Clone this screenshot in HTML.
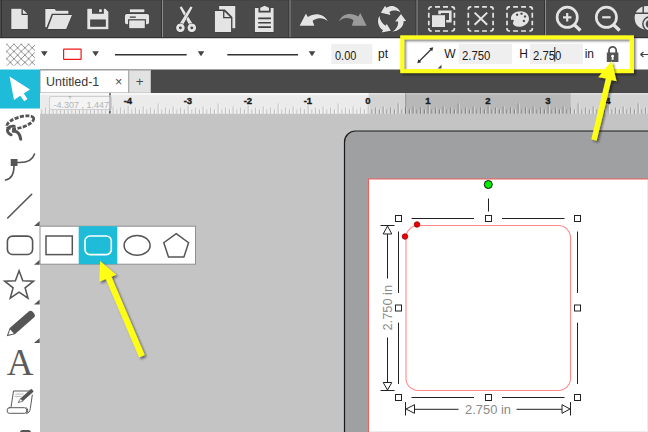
<!DOCTYPE html>
<html><head><meta charset="utf-8"><title>Silhouette Studio</title>
<style>
html,body{margin:0;padding:0;background:#c4c4c4;overflow:hidden}
body{width:648px;height:432px;position:relative;font-family:"Liberation Sans",sans-serif}
svg{position:absolute;left:0;top:0;display:block}
text{font-family:"Liberation Sans",sans-serif}
.rl{font-size:9.5px;font-weight:bold;fill:#1a1a1a;stroke:#1a1a1a;stroke-width:0.35px}
.ui{font-size:12px;fill:#1a1a1a}
.dim{font-size:12.5px;fill:#8a8a8a}
</style></head><body>
<svg width="648" height="432" viewBox="0 0 648 432">
<defs>
<clipPath id="pg"><rect x="369.5" y="90" width="280" height="30"/></clipPath>
<filter id="sh" x="-20%" y="-20%" width="140%" height="140%"><feDropShadow dx="1.8" dy="1.8" stdDeviation="1.3" flood-color="#000" flood-opacity="0.5"/></filter>
<pattern id="hatch" width="7.3" height="7.3" patternUnits="userSpaceOnUse" patternTransform="translate(3,40.5)"><path d="M0,0L7.3,7.3M7.3,0L0,7.3" stroke="#666" stroke-width="0.7" fill="none"/></pattern>
</defs>
<!-- canvas -->
<rect x="0" y="0" width="648" height="432" fill="#c4c4c4"/>
<!-- mat -->
<rect x="344.5" y="131" width="330" height="330" rx="11" fill="#9fa0a1" stroke="#1a1a1a" stroke-width="1.2"/>
<!-- page -->
<rect x="368.5" y="179" width="300" height="300" fill="#fff" stroke="#ee5c5c" stroke-width="1"/>
<!-- top toolbar -->
<rect x="0" y="0" width="648" height="38" fill="#4a4a4a"/>
<rect x="0" y="0" width="648" height="1" fill="#444"/>
<rect x="0" y="37" width="648" height="1.4" fill="#333"/>
<rect x="1" y="0" width="1" height="37" fill="#333"/>
<g id="seps" stroke-width="1">
<path d="M161.5,0v37M289,0v37M416,0v37M544.5,0v37" stroke="#333"/>
<path d="M162.5,0v37M290,0v37M417,0v37M545.5,0v37" stroke="#8c8c8c"/>
</g>
<!-- white toolbar -->
<rect x="0" y="38.4" width="648" height="31.6" fill="#fff"/>
<!-- tab bar -->
<rect x="40" y="69.5" width="608" height="23.5" fill="#4a4a4a"/>
<rect x="40" y="70" width="88.5" height="23" fill="#fff" stroke="#9a9a9a" stroke-width="1"/>
<rect x="129" y="70.5" width="21.5" height="22.5" fill="#e2e2e2" stroke="#bdbdbd" stroke-width="1"/>
<text x="46" y="86" textLength="53.3" lengthAdjust="spacingAndGlyphs" style="font-size:13px;fill:#3a3a3a">Untitled-1</text>
<text x="118.6" y="85.6" text-anchor="middle" style="font-size:12.5px;fill:#4a4a4a">×</text>
<text x="139.6" y="86" text-anchor="middle" style="font-size:13.5px;fill:#4a4a4a">+</text>
<!-- ruler -->
<rect x="40" y="93" width="608" height="20.8" fill="#ebebeb"/>
<rect x="40" y="93" width="608" height="2" fill="#fff" fill-opacity="0.6"/>
<rect x="368.7" y="93" width="280" height="20.8" fill="#000" fill-opacity="0.1"/>
<rect x="405.7" y="93" width="165" height="20.8" fill="#000" fill-opacity="0.125"/>
<path d="M405.7,93v20.8" stroke="#000" stroke-opacity="0.25" stroke-width="1"/>
<path d="M42.45,113.8v-4.3 M46.20,113.8v-6.3 M49.95,113.8v-4.3 M53.70,113.8v-7.3 M57.45,113.8v-4.3 M61.20,113.8v-6.3 M64.95,113.8v-4.3 M68.70,113.8v-8.3 M72.45,113.8v-4.3 M76.20,113.8v-6.3 M79.95,113.8v-4.3 M83.70,113.8v-7.3 M87.45,113.8v-4.3 M91.20,113.8v-6.3 M94.95,113.8v-4.3 M98.70,113.8v-10.3 M102.45,113.8v-4.3 M106.20,113.8v-6.3 M109.95,113.8v-4.3 M113.70,113.8v-7.3 M117.45,113.8v-4.3 M121.20,113.8v-6.3 M124.95,113.8v-4.3 M128.70,113.8v-8.3 M132.45,113.8v-4.3 M136.20,113.8v-6.3 M139.95,113.8v-4.3 M143.70,113.8v-7.3 M147.45,113.8v-4.3 M151.20,113.8v-6.3 M154.95,113.8v-4.3 M158.70,113.8v-10.3 M162.45,113.8v-4.3 M166.20,113.8v-6.3 M169.95,113.8v-4.3 M173.70,113.8v-7.3 M177.45,113.8v-4.3 M181.20,113.8v-6.3 M184.95,113.8v-4.3 M188.70,113.8v-8.3 M192.45,113.8v-4.3 M196.20,113.8v-6.3 M199.95,113.8v-4.3 M203.70,113.8v-7.3 M207.45,113.8v-4.3 M211.20,113.8v-6.3 M214.95,113.8v-4.3 M218.70,113.8v-10.3 M222.45,113.8v-4.3 M226.20,113.8v-6.3 M229.95,113.8v-4.3 M233.70,113.8v-7.3 M237.45,113.8v-4.3 M241.20,113.8v-6.3 M244.95,113.8v-4.3 M248.70,113.8v-8.3 M252.45,113.8v-4.3 M256.20,113.8v-6.3 M259.95,113.8v-4.3 M263.70,113.8v-7.3 M267.45,113.8v-4.3 M271.20,113.8v-6.3 M274.95,113.8v-4.3 M278.70,113.8v-10.3 M282.45,113.8v-4.3 M286.20,113.8v-6.3 M289.95,113.8v-4.3 M293.70,113.8v-7.3 M297.45,113.8v-4.3 M301.20,113.8v-6.3 M304.95,113.8v-4.3 M308.70,113.8v-8.3 M312.45,113.8v-4.3 M316.20,113.8v-6.3 M319.95,113.8v-4.3 M323.70,113.8v-7.3 M327.45,113.8v-4.3 M331.20,113.8v-6.3 M334.95,113.8v-4.3 M338.70,113.8v-10.3 M342.45,113.8v-4.3 M346.20,113.8v-6.3 M349.95,113.8v-4.3 M353.70,113.8v-7.3 M357.45,113.8v-4.3 M361.20,113.8v-6.3 M364.95,113.8v-4.3 M368.70,113.8v-8.3 M372.45,113.8v-4.3 M376.20,113.8v-6.3 M379.95,113.8v-4.3 M383.70,113.8v-7.3 M387.45,113.8v-4.3 M391.20,113.8v-6.3 M394.95,113.8v-4.3 M398.70,113.8v-10.3 M402.45,113.8v-4.3 M406.20,113.8v-6.3 M409.95,113.8v-4.3 M413.70,113.8v-7.3 M417.45,113.8v-4.3 M421.20,113.8v-6.3 M424.95,113.8v-4.3 M428.70,113.8v-8.3 M432.45,113.8v-4.3 M436.20,113.8v-6.3 M439.95,113.8v-4.3 M443.70,113.8v-7.3 M447.45,113.8v-4.3 M451.20,113.8v-6.3 M454.95,113.8v-4.3 M458.70,113.8v-10.3 M462.45,113.8v-4.3 M466.20,113.8v-6.3 M469.95,113.8v-4.3 M473.70,113.8v-7.3 M477.45,113.8v-4.3 M481.20,113.8v-6.3 M484.95,113.8v-4.3 M488.70,113.8v-8.3 M492.45,113.8v-4.3 M496.20,113.8v-6.3 M499.95,113.8v-4.3 M503.70,113.8v-7.3 M507.45,113.8v-4.3 M511.20,113.8v-6.3 M514.95,113.8v-4.3 M518.70,113.8v-10.3 M522.45,113.8v-4.3 M526.20,113.8v-6.3 M529.95,113.8v-4.3 M533.70,113.8v-7.3 M537.45,113.8v-4.3 M541.20,113.8v-6.3 M544.95,113.8v-4.3 M548.70,113.8v-8.3 M552.45,113.8v-4.3 M556.20,113.8v-6.3 M559.95,113.8v-4.3 M563.70,113.8v-7.3 M567.45,113.8v-4.3 M571.20,113.8v-6.3 M574.95,113.8v-4.3 M578.70,113.8v-10.3 M582.45,113.8v-4.3 M586.20,113.8v-6.3 M589.95,113.8v-4.3 M593.70,113.8v-7.3 M597.45,113.8v-4.3 M601.20,113.8v-6.3 M604.95,113.8v-4.3 M608.70,113.8v-8.3 M612.45,113.8v-4.3 M616.20,113.8v-6.3 M619.95,113.8v-4.3 M623.70,113.8v-7.3 M627.45,113.8v-4.3 M631.20,113.8v-6.3 M634.95,113.8v-4.3 M638.70,113.8v-10.3 M642.45,113.8v-4.3 M646.20,113.8v-6.3" stroke="#000" stroke-opacity="0.2" stroke-width="1" transform="translate(-0.5,0)"/>
<path d="M42.45,113.8v-4.3 M46.20,113.8v-6.3 M49.95,113.8v-4.3 M53.70,113.8v-7.3 M57.45,113.8v-4.3 M61.20,113.8v-6.3 M64.95,113.8v-4.3 M68.70,113.8v-8.3 M72.45,113.8v-4.3 M76.20,113.8v-6.3 M79.95,113.8v-4.3 M83.70,113.8v-7.3 M87.45,113.8v-4.3 M91.20,113.8v-6.3 M94.95,113.8v-4.3 M98.70,113.8v-10.3 M102.45,113.8v-4.3 M106.20,113.8v-6.3 M109.95,113.8v-4.3 M113.70,113.8v-7.3 M117.45,113.8v-4.3 M121.20,113.8v-6.3 M124.95,113.8v-4.3 M128.70,113.8v-8.3 M132.45,113.8v-4.3 M136.20,113.8v-6.3 M139.95,113.8v-4.3 M143.70,113.8v-7.3 M147.45,113.8v-4.3 M151.20,113.8v-6.3 M154.95,113.8v-4.3 M158.70,113.8v-10.3 M162.45,113.8v-4.3 M166.20,113.8v-6.3 M169.95,113.8v-4.3 M173.70,113.8v-7.3 M177.45,113.8v-4.3 M181.20,113.8v-6.3 M184.95,113.8v-4.3 M188.70,113.8v-8.3 M192.45,113.8v-4.3 M196.20,113.8v-6.3 M199.95,113.8v-4.3 M203.70,113.8v-7.3 M207.45,113.8v-4.3 M211.20,113.8v-6.3 M214.95,113.8v-4.3 M218.70,113.8v-10.3 M222.45,113.8v-4.3 M226.20,113.8v-6.3 M229.95,113.8v-4.3 M233.70,113.8v-7.3 M237.45,113.8v-4.3 M241.20,113.8v-6.3 M244.95,113.8v-4.3 M248.70,113.8v-8.3 M252.45,113.8v-4.3 M256.20,113.8v-6.3 M259.95,113.8v-4.3 M263.70,113.8v-7.3 M267.45,113.8v-4.3 M271.20,113.8v-6.3 M274.95,113.8v-4.3 M278.70,113.8v-10.3 M282.45,113.8v-4.3 M286.20,113.8v-6.3 M289.95,113.8v-4.3 M293.70,113.8v-7.3 M297.45,113.8v-4.3 M301.20,113.8v-6.3 M304.95,113.8v-4.3 M308.70,113.8v-8.3 M312.45,113.8v-4.3 M316.20,113.8v-6.3 M319.95,113.8v-4.3 M323.70,113.8v-7.3 M327.45,113.8v-4.3 M331.20,113.8v-6.3 M334.95,113.8v-4.3 M338.70,113.8v-10.3 M342.45,113.8v-4.3 M346.20,113.8v-6.3 M349.95,113.8v-4.3 M353.70,113.8v-7.3 M357.45,113.8v-4.3 M361.20,113.8v-6.3 M364.95,113.8v-4.3 M368.70,113.8v-8.3 M372.45,113.8v-4.3 M376.20,113.8v-6.3 M379.95,113.8v-4.3 M383.70,113.8v-7.3 M387.45,113.8v-4.3 M391.20,113.8v-6.3 M394.95,113.8v-4.3 M398.70,113.8v-10.3 M402.45,113.8v-4.3 M406.20,113.8v-6.3 M409.95,113.8v-4.3 M413.70,113.8v-7.3 M417.45,113.8v-4.3 M421.20,113.8v-6.3 M424.95,113.8v-4.3 M428.70,113.8v-8.3 M432.45,113.8v-4.3 M436.20,113.8v-6.3 M439.95,113.8v-4.3 M443.70,113.8v-7.3 M447.45,113.8v-4.3 M451.20,113.8v-6.3 M454.95,113.8v-4.3 M458.70,113.8v-10.3 M462.45,113.8v-4.3 M466.20,113.8v-6.3 M469.95,113.8v-4.3 M473.70,113.8v-7.3 M477.45,113.8v-4.3 M481.20,113.8v-6.3 M484.95,113.8v-4.3 M488.70,113.8v-8.3 M492.45,113.8v-4.3 M496.20,113.8v-6.3 M499.95,113.8v-4.3 M503.70,113.8v-7.3 M507.45,113.8v-4.3 M511.20,113.8v-6.3 M514.95,113.8v-4.3 M518.70,113.8v-10.3 M522.45,113.8v-4.3 M526.20,113.8v-6.3 M529.95,113.8v-4.3 M533.70,113.8v-7.3 M537.45,113.8v-4.3 M541.20,113.8v-6.3 M544.95,113.8v-4.3 M548.70,113.8v-8.3 M552.45,113.8v-4.3 M556.20,113.8v-6.3 M559.95,113.8v-4.3 M563.70,113.8v-7.3 M567.45,113.8v-4.3 M571.20,113.8v-6.3 M574.95,113.8v-4.3 M578.70,113.8v-10.3 M582.45,113.8v-4.3 M586.20,113.8v-6.3 M589.95,113.8v-4.3 M593.70,113.8v-7.3 M597.45,113.8v-4.3 M601.20,113.8v-6.3 M604.95,113.8v-4.3 M608.70,113.8v-8.3 M612.45,113.8v-4.3 M616.20,113.8v-6.3 M619.95,113.8v-4.3 M623.70,113.8v-7.3 M627.45,113.8v-4.3 M631.20,113.8v-6.3 M634.95,113.8v-4.3 M638.70,113.8v-10.3 M642.45,113.8v-4.3 M646.20,113.8v-6.3" stroke="#000" stroke-opacity="0.13" stroke-width="1" transform="translate(-0.5,0)" clip-path="url(#pg)"/>
<path d="M42.45,113.8v-4.3 M46.20,113.8v-6.3 M49.95,113.8v-4.3 M53.70,113.8v-7.3 M57.45,113.8v-4.3 M61.20,113.8v-6.3 M64.95,113.8v-4.3 M68.70,113.8v-8.3 M72.45,113.8v-4.3 M76.20,113.8v-6.3 M79.95,113.8v-4.3 M83.70,113.8v-7.3 M87.45,113.8v-4.3 M91.20,113.8v-6.3 M94.95,113.8v-4.3 M98.70,113.8v-10.3 M102.45,113.8v-4.3 M106.20,113.8v-6.3 M109.95,113.8v-4.3 M113.70,113.8v-7.3 M117.45,113.8v-4.3 M121.20,113.8v-6.3 M124.95,113.8v-4.3 M128.70,113.8v-8.3 M132.45,113.8v-4.3 M136.20,113.8v-6.3 M139.95,113.8v-4.3 M143.70,113.8v-7.3 M147.45,113.8v-4.3 M151.20,113.8v-6.3 M154.95,113.8v-4.3 M158.70,113.8v-10.3 M162.45,113.8v-4.3 M166.20,113.8v-6.3 M169.95,113.8v-4.3 M173.70,113.8v-7.3 M177.45,113.8v-4.3 M181.20,113.8v-6.3 M184.95,113.8v-4.3 M188.70,113.8v-8.3 M192.45,113.8v-4.3 M196.20,113.8v-6.3 M199.95,113.8v-4.3 M203.70,113.8v-7.3 M207.45,113.8v-4.3 M211.20,113.8v-6.3 M214.95,113.8v-4.3 M218.70,113.8v-10.3 M222.45,113.8v-4.3 M226.20,113.8v-6.3 M229.95,113.8v-4.3 M233.70,113.8v-7.3 M237.45,113.8v-4.3 M241.20,113.8v-6.3 M244.95,113.8v-4.3 M248.70,113.8v-8.3 M252.45,113.8v-4.3 M256.20,113.8v-6.3 M259.95,113.8v-4.3 M263.70,113.8v-7.3 M267.45,113.8v-4.3 M271.20,113.8v-6.3 M274.95,113.8v-4.3 M278.70,113.8v-10.3 M282.45,113.8v-4.3 M286.20,113.8v-6.3 M289.95,113.8v-4.3 M293.70,113.8v-7.3 M297.45,113.8v-4.3 M301.20,113.8v-6.3 M304.95,113.8v-4.3 M308.70,113.8v-8.3 M312.45,113.8v-4.3 M316.20,113.8v-6.3 M319.95,113.8v-4.3 M323.70,113.8v-7.3 M327.45,113.8v-4.3 M331.20,113.8v-6.3 M334.95,113.8v-4.3 M338.70,113.8v-10.3 M342.45,113.8v-4.3 M346.20,113.8v-6.3 M349.95,113.8v-4.3 M353.70,113.8v-7.3 M357.45,113.8v-4.3 M361.20,113.8v-6.3 M364.95,113.8v-4.3 M368.70,113.8v-8.3 M372.45,113.8v-4.3 M376.20,113.8v-6.3 M379.95,113.8v-4.3 M383.70,113.8v-7.3 M387.45,113.8v-4.3 M391.20,113.8v-6.3 M394.95,113.8v-4.3 M398.70,113.8v-10.3 M402.45,113.8v-4.3 M406.20,113.8v-6.3 M409.95,113.8v-4.3 M413.70,113.8v-7.3 M417.45,113.8v-4.3 M421.20,113.8v-6.3 M424.95,113.8v-4.3 M428.70,113.8v-8.3 M432.45,113.8v-4.3 M436.20,113.8v-6.3 M439.95,113.8v-4.3 M443.70,113.8v-7.3 M447.45,113.8v-4.3 M451.20,113.8v-6.3 M454.95,113.8v-4.3 M458.70,113.8v-10.3 M462.45,113.8v-4.3 M466.20,113.8v-6.3 M469.95,113.8v-4.3 M473.70,113.8v-7.3 M477.45,113.8v-4.3 M481.20,113.8v-6.3 M484.95,113.8v-4.3 M488.70,113.8v-8.3 M492.45,113.8v-4.3 M496.20,113.8v-6.3 M499.95,113.8v-4.3 M503.70,113.8v-7.3 M507.45,113.8v-4.3 M511.20,113.8v-6.3 M514.95,113.8v-4.3 M518.70,113.8v-10.3 M522.45,113.8v-4.3 M526.20,113.8v-6.3 M529.95,113.8v-4.3 M533.70,113.8v-7.3 M537.45,113.8v-4.3 M541.20,113.8v-6.3 M544.95,113.8v-4.3 M548.70,113.8v-8.3 M552.45,113.8v-4.3 M556.20,113.8v-6.3 M559.95,113.8v-4.3 M563.70,113.8v-7.3 M567.45,113.8v-4.3 M571.20,113.8v-6.3 M574.95,113.8v-4.3 M578.70,113.8v-10.3 M582.45,113.8v-4.3 M586.20,113.8v-6.3 M589.95,113.8v-4.3 M593.70,113.8v-7.3 M597.45,113.8v-4.3 M601.20,113.8v-6.3 M604.95,113.8v-4.3 M608.70,113.8v-8.3 M612.45,113.8v-4.3 M616.20,113.8v-6.3 M619.95,113.8v-4.3 M623.70,113.8v-7.3 M627.45,113.8v-4.3 M631.20,113.8v-6.3 M634.95,113.8v-4.3 M638.70,113.8v-10.3 M642.45,113.8v-4.3 M646.20,113.8v-6.3" stroke="#fff" stroke-opacity="0.5" stroke-width="1" transform="translate(0.5,0)"/>
<text x="127.9" y="103.8" text-anchor="middle" class="rl">-4</text><text x="187.9" y="103.8" text-anchor="middle" class="rl">-3</text><text x="247.9" y="103.8" text-anchor="middle" class="rl">-2</text><text x="307.9" y="103.8" text-anchor="middle" class="rl">-1</text><text x="367.9" y="103.8" text-anchor="middle" class="rl">0</text><text x="427.9" y="103.8" text-anchor="middle" class="rl">1</text><text x="487.9" y="103.8" text-anchor="middle" class="rl">2</text><text x="547.9" y="103.8" text-anchor="middle" class="rl">3</text><text x="607.9" y="103.8" text-anchor="middle" class="rl">4</text>
<rect x="49.5" y="96.5" width="62" height="13" rx="1.5" fill="#f6f6f6" fill-opacity="0.8" stroke="#cfcfcf" stroke-width="1"/>
<path d="M110,93v2.5M110,111v2.5" stroke="#333" stroke-width="1.2"/>
<path d="M110,95.5v15.5" stroke="#999" stroke-width="1.2"/>
<path d="M68.5,96.5h3M69,98h2" stroke="#aaa" stroke-width="0.8"/>
<text x="53.5" y="108" textLength="55.5" lengthAdjust="spacingAndGlyphs" style="font-size:9.5px;fill:#b4b4b4">-4.307 , 1.447</text>
<!-- left panel -->
<rect x="0" y="69.5" width="40" height="363" fill="#fff"/>
<rect x="0" y="69.5" width="40" height="39" fill="#1fbcd9"/>
<path d="M9.6,76.4L30,89.4L23.8,93.5L27.5,99L24.2,101.2L20.2,95.8L14,100z" fill="#fff"/>
<!-- ===== white toolbar ===== -->
<rect x="6.2" y="43.7" width="28.8" height="21.8" fill="url(#hatch)"/>
<path d="M41,51.3h6.6l-3.3,5z" fill="#444"/>
<rect x="63.6" y="49.2" width="17.5" height="10.2" rx="0.5" fill="#fff" stroke="#f01818" stroke-width="1.2"/>
<path d="M92.3,51.3h6.6l-3.3,5z" fill="#444"/>
<path d="M115,54.8h71.7" stroke="#333" stroke-width="1.6"/>
<path d="M197.7,51.3h6.6l-3.3,5z" fill="#444"/>
<path d="M227.3,54.8h70.7" stroke="#333" stroke-width="1.6"/>
<path d="M308.7,51.3h6.6l-3.3,5z" fill="#444"/>
<rect x="331.3" y="44" width="41" height="20" fill="#efefef"/>
<text x="335" y="59.5" class="ui" textLength="21.3" lengthAdjust="spacingAndGlyphs">0.00</text>
<text x="378" y="58.1" class="ui">pt</text>
<!-- yellow highlight -->
<rect x="402.7" y="38.4" width="229.3" height="31.6" fill="#fff"/>
<rect x="402.2" y="37.3" width="229.7" height="33.8" fill="none" stroke="#ffff1e" stroke-width="4" filter="url(#sh)"/>
<path d="M418.5,62l13.5,-13.5" stroke="#333" stroke-width="1.2" fill="none"/>
<path d="M417.3,63.2l1,-4l3,3z M433.2,47.3l-4,1l3,3z" fill="#333"/>
<path d="M441.5,64.8v3.6h-3.8z" fill="#444"/>
<text x="444.3" y="58" class="ui">W</text>
<rect x="458.7" y="44" width="53.3" height="20" fill="#efefef"/>
<text x="462" y="59.5" class="ui" textLength="28.4" lengthAdjust="spacingAndGlyphs">2.750</text>
<text x="519.3" y="58" class="ui">H</text>
<rect x="530" y="44" width="53" height="20" fill="#efefef"/>
<text x="533" y="59.5" class="ui" textLength="28.4" lengthAdjust="spacingAndGlyphs">2.750</text>
<path d="M554.8,47v14.5" stroke="#222" stroke-width="1"/>
<text x="584.7" y="58" class="ui">in</text>
<!-- lock -->
<path d="M609,53v-2.6a3.6,3.6 0 0 1 7.2,0v2.6" fill="none" stroke="#555" stroke-width="1.8"/>
<rect x="606.8" y="52.5" width="11.6" height="9.5" fill="#555"/>
<circle cx="612.6" cy="56.2" r="1.4" fill="#fff"/>
<path d="M612,56.5h1.2l0.5,3.3h-2.2z" fill="#fff"/>
<path d="M640.5,54.5h8M640.5,54.5l3,-2.5M640.5,54.5l3,2.5" stroke="#444" stroke-width="1.2" fill="none"/>
<!-- ===== top toolbar icons ===== -->
<g fill="#e4e4e4" stroke="#3a3a3a" stroke-width="1" paint-order="stroke">
<!-- new -->
<path d="M11.3,8.7h10.2v6.2h6.3v14.2h-16.5z"/>
<path d="M22.8,9.2l4.6,4.6h-4.6z"/>
<!-- open -->
<path d="M45.3,8.9h9.3l1.4,1.8h12.4v3h-16.6l-5.2,13.6h-1.3z"/>
<path d="M52.9,15.1h19.1l-5.8,14h-18.6z"/>
<!-- save -->
<path d="M87.3,8.7h4.7v5.1h11.8v-5.1h1.6l3,3v17.6h-21.1z M90.2,19.6v7.1h15.6v-7.1z" fill-rule="evenodd"/>
<rect x="99.1" y="9.3" width="2.7" height="2.8"/>
<!-- print -->
<rect x="129.8" y="9.3" width="14.6" height="2.9"/>
<path d="M126.9,14h20.2a2,2 0 0 1 2,2v6.2a2,2 0 0 1 -2,2h-1.2v-5h-17.8v5h-1.2a2,2 0 0 1 -2,-2v-6.2a2,2 0 0 1 2,-2z M129.8,16.4v1.4h6v-1.4z" fill-rule="evenodd"/>
<rect x="129.2" y="20.4" width="15.6" height="7.8"/>
<!-- scissors -->
<path d="M179.6,7.500L181.6,6.300L192.440,23.600L189.560,25.400Z"/>
<path d="M192.6,7.500L190.6,6.300L179.760,23.600L182.640,25.400Z"/>
<path d="M180.4,23.500a4.300,4.300 0 1 0 0.010,0z M180.4,26.400a1.400,1.400 0 1 1 -0.010,0z" fill-rule="evenodd"/>
<path d="M191.8,23.500a4.300,4.300 0 1 0 0.010,0z M191.8,26.400a1.400,1.400 0 1 1 -0.010,0z" fill-rule="evenodd"/>
<!-- copy -->
<path d="M219.1,6h16.2v22.2h-2.9v-11.3l-7.5,-7.3h-5.8z"/>
<path d="M214.9,10.9h8.2v7.3h8v13.8h-16.2z"/>
<path d="M224.4,11.5l5.6,5.4h-5.6z"/>
<!-- paste -->
<path d="M254.9,8.1h3.6v4.3h12.1v-4.3h3v24h-18.7z M258.2,17.6v1.6h12.7v-1.6z M258.2,22v1.6h12.7v-1.6z M258.2,26.3v1.6h12.7v-1.6z" fill-rule="evenodd"/>
<path d="M260.2,10.7v-3l4.4,-2l4.4,2v3z"/>
<!-- undo -->
<path d="M299.6,25.7l6.3,-12.2l2,3.4c7,-4.6 16,-3.4 20.1,4.4c-4.6,-4 -10.6,-4.2 -15.400,-0.600l1.8,5z"/>
</g>
<!-- redo -->
<path d="M366.6,25.7l-6.3,-12.600l-2,3.400c-7,-4.600 -16,-3.200 -19.500,4.800c4.400,-4.200 10,-4.400 14.800,-1l-1.800,5.400z" fill="#9a9a9a"/>
<g fill="#e4e4e4" stroke="#3a3a3a" stroke-width="1" paint-order="stroke">
<!-- recycle -->
<path d="M380.8,12.8L385,5.8L386.4,7.8C391.5,4.200 397.8,6.200 400.6,12.400C396.6,9.900 393,9.900 389.4,11.900L390.6,14.900Z"/>
<path d="M401,14L406.2,21L403.6,21.200C404,26.500 399,31.200 392,31.700C396,29.600 398.3,26 398.1,21.400L395,21.400Z"/>
<path d="M390.9,30.700L381.5,32.600L383,30.200C378.2,27 376.6,21 379.4,15.700C380,20.400 382.3,23.800 385.8,25.800L386.7,23.700Z"/>
</g>
<!-- select boxes -->
<g fill="none" stroke="#e4e4e4" stroke-width="1.7">
<path d="M428.8,9.8V9.2A2.4,2.4 0 0 1 431.2,6.8H431.8M451.4,6.8H452.0A2.4,2.4 0 0 1 454.4,9.2V9.8M454.4,28.0V28.6A2.4,2.4 0 0 1 452.0,31.0H451.4M431.8,31.0H431.2A2.4,2.4 0 0 1 428.8,28.6V28.0M435.0,6.8H440.0M435.0,31.0H440.0M443.0,6.8H448.0M443.0,31.0H448.0M428.8,12.8V17.7M454.4,12.8V17.7M428.8,20.7V25.3M454.4,20.7V25.3"/>
<path d="M468.3,9.8V9.2A2.4,2.4 0 0 1 470.7,6.8H471.3M490.1,6.8H490.7A2.4,2.4 0 0 1 493.1,9.2V9.8M493.1,28.0V28.6A2.4,2.4 0 0 1 490.7,31.0H490.1M471.3,31.0H470.7A2.4,2.4 0 0 1 468.3,28.6V28.0M474.3,6.8H479.1M474.3,31.0H479.1M482.1,6.8H486.9M482.1,31.0H486.9M468.3,12.8V17.7M493.1,12.8V17.7M468.3,20.7V25.3M493.1,20.7V25.3"/>
<path d="M507.0,9.8V9.2A2.4,2.4 0 0 1 509.4,6.8H510.0M529.3,6.8H529.9A2.4,2.4 0 0 1 532.3,9.2V9.8M532.3,28.0V28.6A2.4,2.4 0 0 1 529.9,31.0H529.3M510.0,31.0H509.4A2.4,2.4 0 0 1 507.0,28.6V28.0M513.1,6.8H518.0M513.1,31.0H518.0M521.1,6.8H526.0M521.1,31.0H526.0M507.0,12.8V17.7M532.3,12.8V17.7M507.0,20.7V25.3M532.3,20.7V25.3"/>
</g>
<g fill="#e4e4e4">
<rect x="432" y="15.200" width="13" height="11.800"/>
<path d="M438.300,10.400h13.300v12.200h-5.400v-2.600h2.800v-7h-8.100v1.200h-2.600z"/>
<path d="M474.600,12.600l12.600,12.200M487.200,12.600l-12.600,12.200" stroke="#e4e4e4" stroke-width="2" fill="none"/>
<!-- palette -->
<path d="M511,19C510.500,14.500 515,11.200 520.500,11.200C526,11.200 529.200,14.800 529,19C528.800,23.500 524,26.800 519,26.800C515.500,26.800 513.300,25.300 513,23.500C512.800,22.300 514,21.300 513.800,20.300C513.600,19.400 512.600,19.600 511.800,20C511.300,20.200 511,19.800 511,19Z M517.100,13.500a1.200,1.200 0 1 0 0.010,0z M521.500,12.400a1.200,1.200 0 1 0 0.010,0z M525,15.300a1.200,1.200 0 1 0 0.010,0z M523.900,19.700a1.250,1.250 0 1 0 0.010,0z" fill-rule="evenodd"/>
</g>
<!-- zoom -->
<g fill="none" stroke="#e4e4e4">
<circle cx="567.2" cy="17.3" r="10.1" stroke-width="2.7"/>
<path d="M574.6,25l5.8,5.4" stroke-width="3.4"/>
<path d="M563,17.3h8.4M567.2,13.1v8.4" stroke-width="2.2"/>
<circle cx="606.4" cy="17.3" r="10.1" stroke-width="2.7"/>
<path d="M613.8,25l5.8,5.4" stroke-width="3.4"/>
<path d="M602.2,17.3h8.4" stroke-width="2.2"/>
</g>
<circle cx="646.5" cy="17.9" r="11.9" fill="#e4e4e4" stroke="#3a3a3a" stroke-width="1" paint-order="stroke"/>
<path d="M643.2,5v8.2M634,13.2h14" stroke="#4a4a4a" stroke-width="1.5"/>
<circle cx="650" cy="24" r="7.9" fill="#4a4a4a"/>
<circle cx="650" cy="24" r="6.4" fill="#e4e4e4"/>
<circle cx="650" cy="24" r="4.3" fill="#4a4a4a"/>
<!-- ===== canvas: shape + selection ===== -->
<rect x="406" y="225.500" width="164.500" height="165" rx="12" fill="none" stroke="#ff8a8a" stroke-width="1.100"/>
<g stroke="#222" stroke-width="1" fill="none">
<path d="M411.500,218.500h62.500M502,218.500h62.500M411.500,397.500h62.500M502,397.500h62.500"/>
<path d="M398.500,231.500v61.500M398.500,322.700v61.300M577.500,231.500v61.500M577.500,322.700v61.300"/>
<path d="M488.500,198.500v13"/>
</g>
<g stroke="#222" stroke-width="1" fill="#fff">
<rect x="395.5" y="215.5" width="6" height="6"/>
<rect x="485.5" y="215.5" width="6" height="6"/>
<rect x="574.5" y="215.5" width="6" height="6"/>
<rect x="395.5" y="305" width="6" height="6"/>
<rect x="574.5" y="305" width="6" height="6"/>
<rect x="395.5" y="394.5" width="6" height="6"/>
<rect x="485.5" y="394.5" width="6" height="6"/>
<rect x="574.5" y="394.5" width="6" height="6"/>
</g>
<circle cx="488.300" cy="184.500" r="4" fill="#00ee00" stroke="#111" stroke-width="1"/>
<circle cx="417" cy="224.5" r="2.8" fill="#f00000" stroke="#800" stroke-width="0.7"/>
<circle cx="405" cy="236.5" r="2.8" fill="#f00000" stroke="#800" stroke-width="0.7"/>
<!-- dimension lines -->
<g stroke="#222" stroke-width="1" fill="#fff">
<path d="M380.500,225.500h14M380.500,390.500h14"/>
<path d="M387.500,226l-4.300,8h8.600z"/>
<path d="M387.500,390l-4.300,-7.500h8.600z"/>
<path d="M387.500,234v44.500M387.500,337.500v45" fill="none"/>
<path d="M405.500,402v13.500M570.500,402v13.500"/>
<path d="M406,409l8.500,-4.300v8.600z"/>
<path d="M570,409l-8,-4.300v8.600z"/>
<path d="M414.500,409.300h44M516.500,409.300h45.500" fill="none"/>
</g>
<text x="465" y="414" class="dim" textLength="46" lengthAdjust="spacingAndGlyphs">2.750 in</text>
<text transform="translate(392.300,330.500) rotate(-90)" class="dim" textLength="45.500" lengthAdjust="spacingAndGlyphs">2.750 in</text>
<!-- ===== left tools ===== -->
<g fill="none" stroke="#555" stroke-width="1.600" stroke-linecap="round" stroke-linejoin="round">
<!-- lasso -->
<ellipse cx="20.3" cy="122.300" rx="14" ry="5.300" transform="rotate(-17 20.3 122.300)" stroke-width="2.8" stroke-dasharray="4 1.4" stroke-linecap="butt"/>
<path d="M14.200,126.300C9.500,125.500 6.200,129 8,132.200C8.900,133.700 10,134.400 11.200,134.800" stroke-width="2.900"/>
<path d="M13.300,131.300C17.500,130.800 20.300,134.300 20.700,139.200" stroke-width="3.100"/>
<!-- node edit -->
<path d="M17.500,162.500c9,0.500 15,-2 17,-8.500M14,166c0,8 -3,13 -8.500,14"/>
<!-- line -->
<path d="M7.700,218l24,-23.700"/>
<!-- rounded rect -->
<rect x="7.4" y="236.1" width="25.2" height="18.4" rx="5.2"/>
<!-- star -->
<path d="M19.1,270.7L22.8,280.8L33.6,281.2L25.1,287.8L28.0,298.2L19.1,292.2L10.2,298.2L13.1,287.8L4.6,281.2L15.4,280.8Z" stroke-linejoin="miter" stroke-width="1.5"/>
</g>
<rect x="10.700" y="159" width="6.800" height="7" fill="#555"/>
<!-- pencil -->
<path d="M6.700,336.300l3,-8.300l19,-16.500a3,3 0 0 1 4,0.300l1.500,1.800a3,3 0 0 1 -0.300,4l-19,16.600z" fill="#555"/>
<path d="M8.300,334.700l1.900,-5.200l3.600,4.100z" fill="#fff"/>
<!-- corner triangles -->
<g fill="#555">
<path d="M39.700,221v5h-5.700z"/>
<path d="M39.700,259.700v5h-5.700z"/>
<path d="M39.700,299.500v5h-5.700z"/>
<path d="M39.700,338v5h-5.700z"/>
</g>
<text x="20" y="375.300" text-anchor="middle" style="font-family:'Liberation Serif',serif;font-size:37px;fill:#5c5c5c">A</text>
<!-- scroll/note -->
<g fill="none" stroke="#5a5a5a" stroke-width="1" stroke-linejoin="round" stroke-linecap="round">
<path d="M28.5,391H13.5L11,407.5"/>
<path d="M32.3,395L30.3,408.5C30,411.5 28.6,413.3 26.6,413.3"/>
<rect x="7.2" y="407.7" width="19.4" height="5.6" rx="2.2" fill="#fff"/>
<path d="M26.6,407.7C28.2,408.2 28.2,412.8 26.6,413.3"/>
<path d="M15.7,394.1h7.6M15.2,396.4h6.2" stroke="#aaa" stroke-width="0.8"/>
</g>
<path d="M20.4,398.5L30.6,389.3a1,1 0 0 1 1.3,0L33.2,390.7a1,1 0 0 1 0,1.300L22.8,401.3Z" fill="#555"/>
<path d="M18.3,402.6L20.4,398.5L22.8,401.3Z" fill="#fff" stroke="#555" stroke-width="0.7" stroke-linejoin="round"/>
<path d="M18.3,402.6l0.700,-1.400l0.800,0.900z" fill="#555"/>
<path d="M20,432.5c0,-2 1.500,-2.600 3,-2.600h5c1.500,0 3,0.600 3,2.600z" fill="#555"/>
<!-- ===== flyout ===== -->
<rect x="40" y="226.200" width="155.500" height="38" fill="#fff" stroke="#8f8f8f" stroke-width="1"/>
<rect x="78.700" y="226.200" width="38.600" height="38" fill="#1fbcd9"/>
<g fill="none" stroke="#555" stroke-width="1.500">
<rect x="46" y="236" width="26.300" height="18.600"/>
<rect x="85" y="236" width="26.300" height="18.600" rx="5" stroke="#fff" stroke-width="1.600"/>
<ellipse cx="137.100" cy="245.400" rx="13" ry="9.800"/>
<path d="M176.200,233.700l12.400,9l-4.700,14.300h-15.400l-4.700,-14.300z" stroke-linejoin="miter"/>
</g>
<!-- ===== arrows ===== -->
<g fill="#ffff14" filter="url(#sh)">
<path d="M611.6,61L616.6,81.2L611.4,79.9L596.6,140.8L591.3,139.3L605.8,78.6L598.2,77.3Z"/>
<path d="M100.1,261.1L116.2,274.8L111.4,276.8L144.7,355.1L139.1,357.5L105.8,279.1L99.3,281.8Z"/>
</g>
<!-- frame edges -->
<rect x="646" y="37.500" width="2" height="395" fill="#e9e9e9" opacity="0"/>
<rect x="647" y="180" width="1" height="252" fill="#ececec"/>
<rect x="369" y="431" width="279" height="1" fill="#ececec"/>

</svg>
</body></html>
